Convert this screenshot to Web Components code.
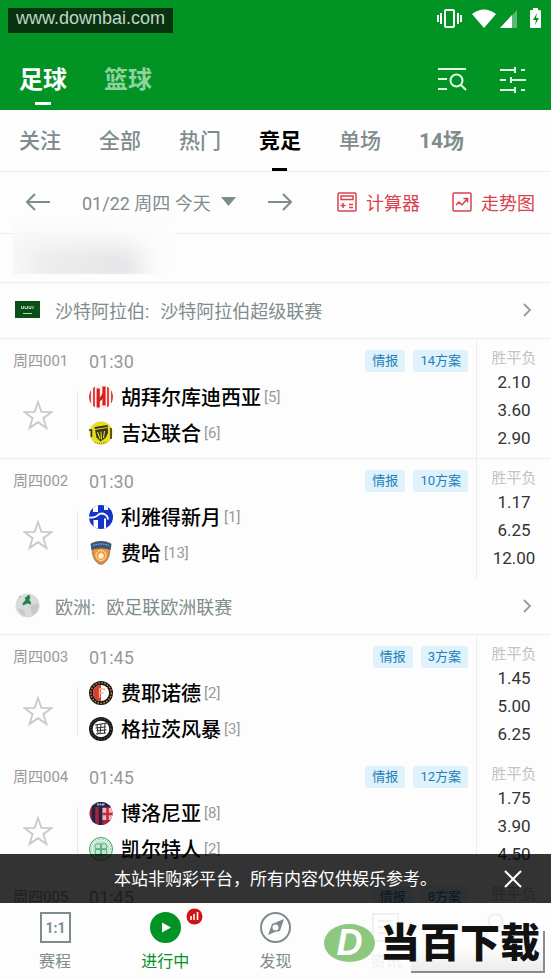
<!DOCTYPE html>
<html lang="zh-CN">
<head>
<meta charset="utf-8">
<meta name="viewport" content="width=device-width, initial-scale=1">
<title>足球 - 竞足</title>
<style>
  html, body { height: 100%; margin: 0; }
  body {
    font-family: Roboto, "Noto Sans CJK SC", sans-serif;
    background: #fdfdfd;
    color: #000;
  }
</style>
</head>
<body>
<score-app></score-app>

<script>
// Shared reset, every shadow root starts with it
const BASE = `
  *, *::before { box-sizing: border-box; }
  button { font: inherit; color: inherit; background: none; border: 0; padding: 0; cursor: pointer; }
  a { color: inherit; text-decoration: none; }
  svg { display: block; flex: none; }
`;

// ==========================================
// Club crests and flags, 24px grid
// ==========================================
const CRESTS = {
  qadsiah: `<clipPath id="c"><circle cx="12" cy="12" r="12"/></clipPath>
    <g clip-path="url(#c)"><rect width="24" height="24" fill="#fdeeec"/>
    <path d="M1 5v14M5 1v22M19 1v22M23 5v14" stroke="#dd2f2f" stroke-width="1.800"/>
    <path d="M9.200 3.500v19M15 1.500v19" stroke="#d61f1f" stroke-width="3.200"/>
    <path d="M9 15.500q3-1 6-6.500" fill="none" stroke="#d61f1f" stroke-width="3"/></g>`,
  ittihad: `<circle cx="12" cy="12" r="11.500" fill="#e6dc22"/>
    <path d="M0 9h2.500v7M22 7v11" fill="none" stroke="#2c2b12" stroke-width="1.500"/>
    <path d="M5.500 6l13-2 .5 8-2.500 5-5 3.500-4-4z" fill="#38361a"/>
    <path d="M6 8.500l12-2" stroke="#d8cf38" stroke-width="1.200"/>
    <path d="M8.500 11l2.500 7M12 10.500l.5 8M15.500 10l-1 7" stroke="#e6dc22" stroke-width="1.100"/>
    <path d="M6 21.500q6 2 12-.5" fill="none" stroke="#6b671b" stroke-dasharray="1 1"/>`,
  hilal: `<clipPath id="c"><circle cx="12" cy="12" r="12"/></clipPath>
    <g clip-path="url(#c)"><rect width="24" height="24" fill="#1433c8"/>
    <path d="M4 0h5v7H4zM15 0h4v5h-4z" fill="#fff"/>
    <path d="M0 12.500q7 .5 9.500-3 3.500-2 6.500 0 3 1.500 3 5" fill="none" stroke="#fff" stroke-width="1.800"/>
    <path d="M4.500 15h4.500v9H4.500zM15 13.500h2V24h-2z" fill="#fff"/></g>`,
  fayha: `<path d="M2 2q10-4 20 0l-1 11q-2 9-9 11-7-2-9-11z" fill="#b98a60"/>
    <path d="M1.500 3q10.500-6 21 0l-1 6q-9.500-3-19 0z" fill="#38567f"/>
    <path d="M4 4.500q8-3 16 0" fill="none" stroke="#b9c8dc" stroke-dasharray="1.500 1"/>
    <path d="M4.500 8.500q7.500-2 15 0-.5 11-7.500 13.500-7-2.500-7.500-13.500z" fill="#f39a2d"/>
    <circle cx="12" cy="14.500" r="5" fill="none" stroke="#ffe2b8"/>
    <path d="M12 11.500l3 2.500-1 3.500h-4l-1-3.500z" fill="#fff0d8"/>`,
  feyenoord: `<circle cx="12" cy="12" r="12" fill="#1d1712"/>
    <circle cx="12" cy="12" r="10.200" fill="none" stroke="#a88a4c" stroke-width="1.500" stroke-dasharray="1.500 1.500"/>
    <circle cx="12" cy="12" r="8" fill="#fff"/>
    <path d="M12 4a8 8 0 0 0 0 16z" fill="#dc3a2c"/>
    <path d="M10.500 17V8h5v1.500M10.500 12h4" fill="none" stroke="#e6b89c" stroke-width="1.300"/>`,
  sturm: `<circle cx="12" cy="12" r="12" fill="#16181a"/>
    <circle cx="12" cy="12" r="10.200" fill="none" stroke="#777" stroke-dasharray="1 2"/>
    <circle cx="12" cy="12" r="8.300" fill="#fff"/>
    <path d="M6 8l12-2M6.500 11l10-1M7.500 13.500l10-.5M7 17l10-1M8 8l1 9M12 7l-1 10M16 7l-.5 9" stroke="#2a2c2e" stroke-width="1"/>`,
  bologna: `<clipPath id="c"><circle cx="12" cy="12.500" r="11.500"/></clipPath>
    <g clip-path="url(#c)"><rect width="24" height="24" fill="#a8223c"/>
    <path d="M4.500 6v18M11.500 6v18M22.500 18v6" stroke="#1c2747" stroke-width="3.500"/>
    <path d="M0 0h24v6H0z" fill="#1c2747"/>
    <path d="M13.500 7H24v12H13.500z" fill="#e7b9c0"/>
    <path d="M18.500 7v12M13.500 13H24" stroke="#c32a3c" stroke-width="2.600"/>
    <path d="M8 3.500h8" stroke="#9fb4cf" stroke-width="2" stroke-dasharray="2 .5"/></g>`,
  celtic: `<circle cx="12" cy="12" r="11.500" fill="#e9f8ef" stroke="#3a9e66"/>
    <circle cx="12" cy="12" r="8.500" fill="#c4e6d1"/>
    <circle cx="12" cy="12" r="9.800" fill="none" stroke="#5eb384" stroke-dasharray="1 1.500"/>
    <g fill="none" stroke="#4dab74" stroke-width=".9"><circle cx="9" cy="9.500" r="3"/><circle cx="15" cy="9.500" r="3"/>
    <circle cx="9" cy="15" r="3"/><circle cx="15" cy="15" r="3"/><path d="M12 6v13M6 12h12"/></g>`,
  other: `<circle cx="12" cy="12" r="11" fill="#ddd"/>`
};

const FLAGS = {
  saudi: `<rect y="4" width="25" height="17" fill="#0a4f18"/>
    <path d="M6.500 9v2.500h2V9M10 9v2.500h2.500V9M14 9v2.500h2V9M18 9v3" fill="none" stroke="#b9d3be"/>
    <path d="M8 16.500h9" stroke="#b9d3be"/>`,
  europe: `<circle cx="12.500" cy="12.500" r="12" fill="#d9dadb"/>
    <path d="M3 15l6 2 2 6q-6-1-8-8zM15 13l8-3q3 8-6 12z" fill="#c6c8c9"/>
    <path d="M4 4l2-1M8 10l3-3-1-2 4-3 1 2-1 3 2 3-1 1-3-1-1 1-3 1z" fill="#20834a" stroke="#20834a" stroke-width=".6"/>
    <path d="M13 9l3 2v1z" fill="#20834a"/>`
};

// ==========================================
// Status bar
// ==========================================
class StatusBar extends HTMLElement {
  constructor() {
    super();
    this.attachShadow({ mode: 'open' }).innerHTML = `
      <style>${BASE}
        :host { display: flex; align-items: center; justify-content: space-between; height: 40px; padding: 0 8px; }
        .site { display: flex; align-items: center; justify-content: center; width: 165px; height: 25px;
          background: #07330f; color: #c3d3c6; font: 18px/21px "Liberation Sans", sans-serif; padding-bottom: 4px; }
        .icons { display: flex; align-items: center; margin-bottom: 4px; }
      </style>
      <div class="site">www.downbai.com</div>
      <div class="icons">
        <svg width="106" height="24" viewBox="0 0 106 24" fill="#fff">
          <path d="M0 9h2v7H0zM3 7h2v11H3zM20 7h2v11h-2zM23 9h2v7h-2z"/>
          <rect x="8" y="4" width="9" height="17" rx="1" fill="none" stroke="#fff" stroke-width="2"/>
          <path d="M35 8q12-9 24 0L47 22z"/>
          <path d="M80 4v18H63z" opacity=".35"/><path d="M75 9v13H63z"/>
          <path d="M95 4h1V2h5v2h1q2 0 2 1v16q0 1-1 1H94q-1 0-1-1V5q0-1 1-1z"/>
          <path d="M100 7l-4 7h3l-1 5 4-7h-3z" fill="#019324"/>
        </svg>
      </div>`;
  }
}

// ==========================================
// Green header: sport switch and tools
// ==========================================
class SportHeader extends HTMLElement {
  constructor() {
    super();
    this.attachShadow({ mode: 'open' }).innerHTML = `
      <style>${BASE}
        :host { display: block; height: 110px; background: #019324; color: #fff; flex: none; }
        .row { display: flex; align-items: center; height: 70px; padding: 0 24px 0 19px; }
        .sports { display: flex; gap: 37px; flex: 1; }
        .sports button { position: relative; font-size: 24px; line-height: 50px; height: 50px; font-weight: 700; color: #8ed29c; margin-top: 10px; }
        .sports .on { color: #fff; }
        .sports .on::before { content: ""; position: absolute; left: 16px; right: 16px; bottom: 0; height: 3px; background: #fff; }
        .tools { display: flex; gap: 32px; margin-top: 10px; }
      </style>
      <status-bar></status-bar>
      <div class="row">
        <div class="sports">
          <button class="on">足球</button>
          <button>篮球</button>
        </div>
        <div class="tools">
          <button aria-label="搜索">
            <svg width="30" height="26" viewBox="0 0 30 26" fill="none" stroke="#e4fbe8" stroke-width="2">
              <path d="M1 2h28M1 12h9M1 22h9"/><circle cx="19.500" cy="13.500" r="6"/><path d="M24 18l5 5"/>
            </svg>
          </button>
          <button aria-label="筛选">
            <svg width="28" height="26" viewBox="0 0 28 26" fill="none" stroke="#e4fbe8" stroke-width="2">
              <path d="M1 3h15M22 3h4M16 0v6M1 13h6M12 13h15M12 10v6M1 23h15M22 23h4M16 20v6"/>
            </svg>
          </button>
        </div>
      </div>`;
  }
}

// ==========================================
// Category tabs
// ==========================================
class CategoryTabs extends HTMLElement {
  constructor() {
    super();
    this.attachShadow({ mode: 'open' });
  }

  connectedCallback() {
    const active = this.getAttribute('active');
    const tabs = this.getAttribute('tabs').split(',');
    this.shadowRoot.innerHTML = `
      <style>${BASE}
        :host { display: flex; gap: 38px; height: 62px; padding: 0 19px; border-bottom: 1px solid #eceeee; flex: none; }
        button { position: relative; font-size: 21px; font-weight: 500; color: #7f8c8d; height: 61px; padding-bottom: 3px; white-space: nowrap; }
        .on { color: #000; font-weight: 700; }
        .num { font-weight: 700; }
        .on::before { content: ""; position: absolute; left: 13px; right: 14px; bottom: 0; height: 3px; background: #000; }
      </style>
      ${tabs.map(t => `<button class="${t === active ? 'on' : /^\d/.test(t) ? 'num' : ''}">${t}</button>`).join('')}`;
  }
}

// ==========================================
// Date picker row
// ==========================================
class DateBar extends HTMLElement {
  constructor() {
    super();
    this.attachShadow({ mode: 'open' }).innerHTML = `
      <style>${BASE}
        :host { display: flex; align-items: center; justify-content: space-between; height: 62px; padding: 0 16px 2px 26px;
          border-bottom: 1px solid #eceeee; font-size: 18px; color: #7f8c8d; flex: none; white-space: nowrap; }
        .days, .links { display: flex; align-items: center; gap: 32px; }
        .day { display: flex; align-items: center; gap: 10px; }
        .links a { display: flex; align-items: center; gap: 9px; color: #d8434e; }
      </style>
      <div class="days">
        <button aria-label="前一天"><svg width="24" height="20" viewBox="0 0 24 20" fill="none" stroke="#7f8c8d" stroke-width="2"><path d="M24 10H2M9 2l-8 8 8 8"/></svg></button>
        <button class="day"><slot></slot><svg width="15" height="9" viewBox="0 0 15 9" fill="#7f8c8d"><path d="M0 0h15L7.500 9z"/></svg></button>
        <button aria-label="后一天"><svg width="24" height="20" viewBox="0 0 24 20" fill="none" stroke="#7f8c8d" stroke-width="2"><path d="M0 10h22M15 2l8 8-8 8"/></svg></button>
      </div>
      <div class="links">
        <a href="#calc"><svg width="20" height="20" viewBox="0 0 20 20" fill="none" stroke="#d8434e" stroke-width="1.500"><rect x="1" y="1" width="18" height="18" rx="1"/><path d="M4 4h12v3.500H4zM3.500 13.500h5M6 11v5M12 12.500h4M12 15.500h4"/></svg>计算器</a>
        <a href="#trend"><svg width="20" height="20" viewBox="0 0 20 20" fill="none" stroke="#d8434e" stroke-width="1.500"><rect x="1" y="1" width="18" height="18" rx="1"/><path d="M4 13l3-3 3 3 5-6M11.500 6.500H15.500v4"/></svg>走势图</a>
      </div>`;
  }
}

// Strip with the softened block under the date
class PromoStrip extends HTMLElement {
  constructor() {
    super();
    this.attachShadow({ mode: 'open' }).innerHTML = `
      <style>${BASE}
        :host { display: block; position: relative; height: 49px; border-bottom: 1px solid #eceeee; flex: none; }
        div { position: absolute; left: 13px; bottom: 8px; width: 162px; height: 58px; overflow: hidden;
          background: linear-gradient(90deg, #f8f8f8, #fdfdfd);
          -webkit-mask-image: linear-gradient(transparent, #000 35%); mask-image: linear-gradient(transparent, #000 35%); }
        div::before { content: ""; position: absolute; left: 14px; right: 34px; top: 32px; height: 34px; border-radius: 12px;
          background: linear-gradient(90deg, #ececec, #dedfe1); filter: blur(12px); }
      </style>
      <div></div>`;
  }
}

// ==========================================
// League heading
// ==========================================
class LeagueRow extends HTMLElement {
  constructor() {
    super();
    this.attachShadow({ mode: 'open' });
  }

  connectedCallback() {
    this.shadowRoot.innerHTML = `
      <style>${BASE}
        :host { display: block; border-bottom: 1px solid #eceeee; }
        a { display: flex; align-items: center; height: 55px; padding: 0 20px 2px 15px; font-size: 18px; color: #7f8c8d; }
        .country { margin: 0 11px 0 15px; }
        .name { flex: 1; }
      </style>
      <a href="#league">
        <svg width="25" height="25" viewBox="0 0 25 25">${FLAGS[this.getAttribute('flag')]}</svg>
        <span class="country">${this.getAttribute('country')}:</span>
        <span class="name"><slot></slot></span>
        <svg width="8" height="14" viewBox="0 0 8 14" fill="none" stroke="#999" stroke-width="1.800"><path d="M1 1l6 6-6 6"/></svg>
      </a>`;
  }
}

// ==========================================
// Team line, name goes into the slot
// ==========================================
class TeamLine extends HTMLElement {
  constructor() {
    super();
    this.attachShadow({ mode: 'open' });
  }

  connectedCallback() {
    this.shadowRoot.innerHTML = `
      <style>${BASE}
        :host { display: flex; align-items: center; height: 36px; font-size: 20px; font-weight: 500; white-space: nowrap; }
        .name { margin: 0 3px 0 8px; padding-bottom: 2px; }
        .rank { font-size: 15px; font-weight: 400; color: #999; }
      </style>
      <svg width="24" height="24" viewBox="0 0 24 24">${CRESTS[this.getAttribute('crest')]}</svg>
      <span class="name"><slot></slot></span>
      <span class="rank">[${this.getAttribute('rank')}]</span>`;
  }
}

// ==========================================
// Match card
// ==========================================
class MatchCard extends HTMLElement {
  constructor() {
    super();
    this.attachShadow({ mode: 'open' });
  }

  connectedCallback() {
    const odds = (this.getAttribute('odds') || '').split(' ').filter(Boolean);
    this.shadowRoot.innerHTML = `
      <style>${BASE}
        :host { display: flex; height: 120px; }
        :host([line]) { border-bottom: 1px solid #eceeee; }
        .side { width: 77px; padding-top: 4px; flex: none; }
        .no { height: 36px; line-height: 36px; font-size: 15px; color: #999; padding-left: 13px; white-space: nowrap; }
        .star { display: flex; align-items: center; justify-content: center; width: 76px; height: 72px; }
        .main { flex: 1; min-width: 0; padding-top: 4px; }
        .top { display: flex; align-items: center; gap: 8px; height: 36px; padding: 0 8px 0 12px; }
        time { flex: 1; font-size: 18px; color: #999; }
        .tag { height: 22px; padding: 0 7px; border-radius: 3px; background: #dff2fc; color: #1b81b8;
          font-size: 13px; line-height: 22px; }
        .teams { position: relative; padding-left: 12px; }
        .teams::before { content: ""; position: absolute; left: 0; top: 12px; bottom: 12px; width: 1px; background: #e6e8e8; }
        .odds { width: 75px; padding-top: 7px; border-left: 1px solid #eceeee; text-align: center; flex: none; }
        .odds h4 { margin: 0; font-size: 15px; font-weight: 400; line-height: 24px; color: #c4c4c4; }
        .odds div { font-size: 17px; line-height: 28px; color: #333; }
        .odds h4 + div { margin-top: -2px; }
      </style>
      <div class="side">
        <div class="no">${this.getAttribute('no')}</div>
        <button class="star" aria-label="关注">
          <svg width="30" height="30" viewBox="0 0 30 30" fill="none" stroke="#c8c8c8" stroke-width="1.800"><path d="M15 2l3.400 9.800 10.200.2-8.200 6.200 3 9.800L15 22.200 6.600 28l3-9.800L1.400 12l10.200-.2z"/></svg>
        </button>
      </div>
      <div class="main">
        <div class="top">
          <time>${this.getAttribute('time')}</time>
          <button class="tag">情报</button>
          <button class="tag">${this.getAttribute('plans')}方案</button>
        </div>
        <div class="teams"><slot></slot></div>
      </div>
      <div class="odds">
        <h4>胜平负</h4>
        ${odds.map(o => `<div>${o}</div>`).join('')}
      </div>`;
  }
}

// ==========================================
// Notice over the end of the list
// ==========================================
class NoticeBar extends HTMLElement {
  constructor() {
    super();
    this.attachShadow({ mode: 'open' }).innerHTML = `
      <style>${BASE}
        :host { display: grid; grid-template-columns: 76px 1fr 76px; align-items: center; height: 49px;
          background: rgba(0, 0, 0, .8); color: #fff; font-size: 17px; text-align: center; }
        p { grid-column: 2; margin: 0; padding-bottom: 2px; white-space: nowrap; }
        button { display: flex; align-items: center; justify-content: center; height: 49px; }
      </style>
      <p><slot></slot></p>
      <button aria-label="关闭"><svg width="18" height="18" viewBox="0 0 18 18" stroke="#fff" stroke-width="2"><path d="M1 1l16 16M17 1L1 17"/></svg></button>`;
    this.shadowRoot.querySelector('button').addEventListener('click', () => this.remove());
  }
}

// ==========================================
// Bottom navigation
// ==========================================
class BottomNav extends HTMLElement {
  constructor() {
    super();
    this.attachShadow({ mode: 'open' }).innerHTML = `
      <style>${BASE}
        :host { display: block; position: relative; height: 76px; background: #fdfdfd; flex: none; }
        nav { display: grid; grid-template-columns: repeat(5, 1fr); }
        a { display: flex; flex-direction: column; align-items: center; gap: 7px; padding-top: 9px;
          font-size: 16px; line-height: 24px; color: #7f8c8d; }
        .on { color: #019324; }
        .faint { color: #f0f0f0; }
        .play { position: relative; }
        .badge { position: absolute; left: 36px; top: -4px; }
        .score { font: bold 14px Roboto, sans-serif; }
        .brand { position: absolute; right: 6px; bottom: 6px; display: flex; align-items: center; gap: 5px; }
        .plate { position: absolute; right: 0; bottom: 0; width: 134px; height: 42px;
          border-right: 2px solid #8a8a8a; border-bottom: 2px solid #8a8a8a;
          background: linear-gradient(to top, #ececec, rgba(253, 253, 253, 0) 60%); }
        .d { position: relative; display: flex; align-items: center; justify-content: center; width: 51px; height: 38px; margin-bottom: 6px;
          border-radius: 50%; background: #8cc97e; color: #fff; font: italic bold 36px/38px "Liberation Sans", sans-serif; }
        .words { position: relative; font-size: 40px; line-height: 50px; font-weight: 900; color: #111; margin-bottom: 4px; padding-right: 5px; }
      </style>
      <nav>
        <a href="#schedule">
          <svg width="31" height="31" viewBox="0 0 31 31"><rect x="1" y="1" width="29" height="29" fill="none" stroke="#7f8c8d" stroke-width="2"/><text class="score" x="15.500" y="20.500" text-anchor="middle" fill="#7f8c8d">1:1</text></svg>
          赛程
        </a>
        <a href="#live" class="on">
          <span class="play">
            <svg width="31" height="31" viewBox="0 0 31 31"><circle cx="15.500" cy="15.500" r="15.500" fill="#019324"/><path d="M12 10.500l9 5-9 5z" fill="#fff"/></svg>
            <svg class="badge" width="17" height="17" viewBox="0 0 17 17"><circle cx="8.500" cy="8.500" r="8" fill="#d01414"/><path d="M5 8v4M8 6v6M11.500 4v8" stroke="#fff" stroke-width="1.600"/></svg>
          </span>
          进行中
        </a>
        <a href="#discover">
          <svg width="31" height="31" viewBox="0 0 31 31" fill="none" stroke="#7f8c8d" stroke-width="2"><circle cx="15.500" cy="15.500" r="14.500"/><path d="M24 7l-4 12-5 1-7 3 4-11z" fill="#7f8c8d" stroke="none"/><circle cx="15.500" cy="15.500" r="3" fill="#fdfdfd" stroke="none"/></svg>
          发现
        </a>
        <a href="#news" class="faint">
          <svg width="31" height="31" viewBox="0 0 31 31" fill="none" stroke="#f0f0f0" stroke-width="2"><path d="M3 2h25v27H3zM8 9h15M8 15h15M8 21h9"/></svg>
          资讯
        </a>
        <a href="#me" class="faint" aria-label="我的">
          <svg width="31" height="31" viewBox="0 0 31 31" fill="none" stroke="#f0f0f0" stroke-width="2"><circle cx="15.500" cy="9" r="7"/><path d="M3 30q2-12 12.500-12T28 30"/></svg>
        </a>
      </nav>
      <div class="brand"><span class="plate"></span><span class="d">D</span><span class="words">当百下载</span></div>`;
  }
}

// ==========================================
// Page
// ==========================================
class ScoreApp extends HTMLElement {
  constructor() {
    super();
    this.attachShadow({ mode: 'open' }).innerHTML = `
      <style>${BASE}
        :host { display: flex; flex-direction: column; height: 100vh; }
        .body { position: relative; flex: 1; min-height: 0; }
        .list { height: 100%; overflow-y: auto; scrollbar-width: none; }
        notice-bar { position: absolute; left: 0; right: 0; bottom: 0; }
      </style>
      <sport-header></sport-header>
      <category-tabs tabs="关注,全部,热门,竞足,单场,14场" active="竞足"></category-tabs>
      <date-bar>01/22 周四 今天</date-bar>
      <promo-strip></promo-strip>
      <div class="body">
        <div class="list">
          <league-row flag="saudi" country="沙特阿拉伯">沙特阿拉伯超级联赛</league-row>
          <match-card line no="周四001" time="01:30" plans="14" odds="2.10 3.60 2.90">
            <team-line crest="qadsiah" rank="5">胡拜尔库迪西亚</team-line>
            <team-line crest="ittihad" rank="6">吉达联合</team-line>
          </match-card>
          <match-card no="周四002" time="01:30" plans="10" odds="1.17 6.25 12.00">
            <team-line crest="hilal" rank="1">利雅得新月</team-line>
            <team-line crest="fayha" rank="13">费哈</team-line>
          </match-card>
          <league-row flag="europe" country="欧洲">欧足联欧洲联赛</league-row>
          <match-card no="周四003" time="01:45" plans="3" odds="1.45 5.00 6.25">
            <team-line crest="feyenoord" rank="2">费耶诺德</team-line>
            <team-line crest="sturm" rank="3">格拉茨风暴</team-line>
          </match-card>
          <match-card no="周四004" time="01:45" plans="12" odds="1.75 3.90 4.50">
            <team-line crest="bologna" rank="8">博洛尼亚</team-line>
            <team-line crest="celtic" rank="2">凯尔特人</team-line>
          </match-card>
          <match-card no="周四005" time="01:45" plans="8"></match-card>
        </div>
        <notice-bar>本站非购彩平台，所有内容仅供娱乐参考。</notice-bar>
      </div>
      <bottom-nav></bottom-nav>`;
  }
}

customElements.define('status-bar', StatusBar);
customElements.define('sport-header', SportHeader);
customElements.define('category-tabs', CategoryTabs);
customElements.define('date-bar', DateBar);
customElements.define('promo-strip', PromoStrip);
customElements.define('league-row', LeagueRow);
customElements.define('team-line', TeamLine);
customElements.define('match-card', MatchCard);
customElements.define('notice-bar', NoticeBar);
customElements.define('bottom-nav', BottomNav);
customElements.define('score-app', ScoreApp);
</script>
</body>
</html>
